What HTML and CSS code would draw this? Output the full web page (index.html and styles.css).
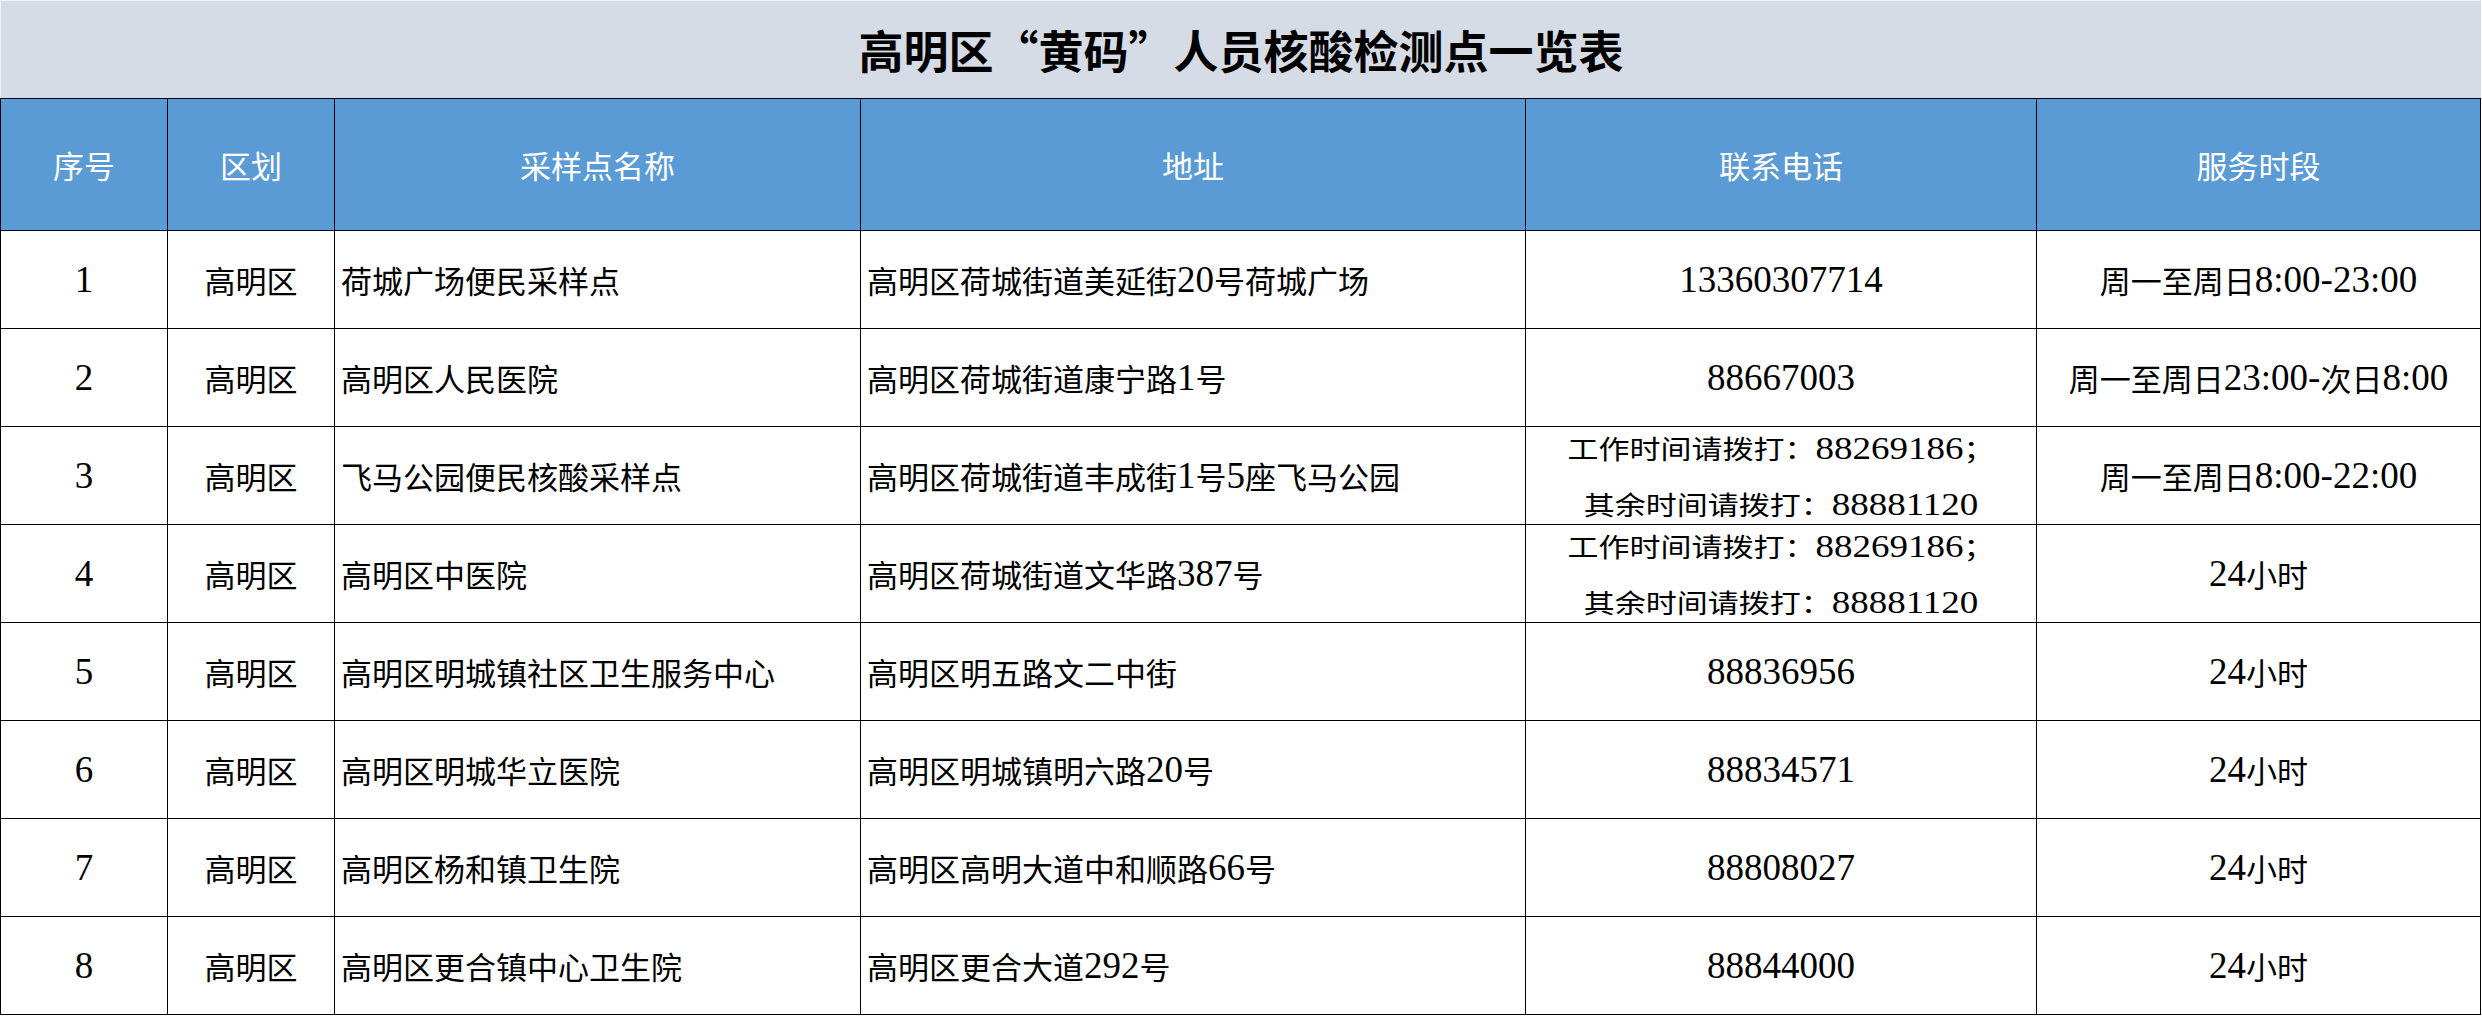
FILE: index.html
```html
<!DOCTYPE html>
<html lang="zh-CN">
<head>
<meta charset="utf-8">
<title>高明区“黄码”人员核酸检测点一览表</title>
<link rel="stylesheet" href="styles.css">
</head>
<body>
<div class="page">
  <div class="title">高明区“黄码”人员核酸检测点一览表</div>
  <div class="grid">
    <div class="cell head">序号</div>
    <div class="cell head">区划</div>
    <div class="cell head">采样点名称</div>
    <div class="cell head">地址</div>
    <div class="cell head">联系电话</div>
    <div class="cell head">服务时段</div>

    <div class="cell c n">1</div>
    <div class="cell c">高明区</div>
    <div class="cell l">荷城广场便民采样点</div>
    <div class="cell l">高明区荷城街道美延街<span class="n">20</span>号荷城广场</div>
    <div class="cell c n">13360307714</div>
    <div class="cell c">周一至周日<span class="n">8:00-23:00</span></div>

    <div class="cell c n">2</div>
    <div class="cell c">高明区</div>
    <div class="cell l">高明区人民医院</div>
    <div class="cell l">高明区荷城街道康宁路<span class="n">1</span>号</div>
    <div class="cell c n">88667003</div>
    <div class="cell c">周一至周日<span class="n">23:00-</span>次日<span class="n">8:00</span></div>

    <div class="cell c n">3</div>
    <div class="cell c">高明区</div>
    <div class="cell l">飞马公园便民核酸采样点</div>
    <div class="cell l">高明区荷城街道丰成街<span class="n">1</span>号<span class="n">5</span>座飞马公园</div>
    <div class="cell c">
      <div class="two">
        <span class="ln">工作时间请拨打：<span class="n">88269186</span>；</span>
        <span class="ln">其余时间请拨打：<span class="n">88881120</span></span>
      </div>
    </div>
    <div class="cell c">周一至周日<span class="n">8:00-22:00</span></div>

    <div class="cell c n">4</div>
    <div class="cell c">高明区</div>
    <div class="cell l">高明区中医院</div>
    <div class="cell l">高明区荷城街道文华路<span class="n">387</span>号</div>
    <div class="cell c">
      <div class="two">
        <span class="ln">工作时间请拨打：<span class="n">88269186</span>；</span>
        <span class="ln">其余时间请拨打：<span class="n">88881120</span></span>
      </div>
    </div>
    <div class="cell c"><span class="n">24</span>小时</div>

    <div class="cell c n">5</div>
    <div class="cell c">高明区</div>
    <div class="cell l">高明区明城镇社区卫生服务中心</div>
    <div class="cell l">高明区明五路文二中街</div>
    <div class="cell c n">88836956</div>
    <div class="cell c"><span class="n">24</span>小时</div>

    <div class="cell c n">6</div>
    <div class="cell c">高明区</div>
    <div class="cell l">高明区明城华立医院</div>
    <div class="cell l">高明区明城镇明六路<span class="n">20</span>号</div>
    <div class="cell c n">88834571</div>
    <div class="cell c"><span class="n">24</span>小时</div>

    <div class="cell c n">7</div>
    <div class="cell c">高明区</div>
    <div class="cell l">高明区杨和镇卫生院</div>
    <div class="cell l">高明区高明大道中和顺路<span class="n">66</span>号</div>
    <div class="cell c n">88808027</div>
    <div class="cell c"><span class="n">24</span>小时</div>

    <div class="cell c n">8</div>
    <div class="cell c">高明区</div>
    <div class="cell l">高明区更合镇中心卫生院</div>
    <div class="cell l">高明区更合大道<span class="n">292</span>号</div>
    <div class="cell c n">88844000</div>
    <div class="cell c"><span class="n">24</span>小时</div>
  </div>
</div>
</body>
</html>
```
FILE: styles.css
```css
html, body {
  margin: 0;
  padding: 0;
  background: #ffffff;
}

.page {
  width: 2481px;
  font-family: "Noto Sans CJK SC", sans-serif;
  color: #000000;
}

.title {
  height: 98px;
  background: #d6dce5;
  display: flex;
  align-items: center;
  justify-content: center;
  font-family: "Noto Sans CJK SC", sans-serif;
  font-weight: 700;
  font-size: 45px;
  color: #000000;
  box-sizing: border-box;
  border-top: 1px solid #eef1f5;
  border-left: 1px solid #eef1f5;
}

.grid {
  display: grid;
  grid-template-columns: 167px 167px 526px 665px 511px 444px;
  grid-template-rows: 132px repeat(8, 98px);
  border-top: 1px solid #000000;
  border-left: 1px solid #000000;
  width: 2480px;
}

.cell {
  box-sizing: border-box;
  border-right: 1px solid #000000;
  border-bottom: 1px solid #000000;
  display: flex;
  align-items: center;
  font-size: 31px;
  line-height: 40px;
  white-space: nowrap;
  overflow: visible;
}

.head {
  background: #5b9bd5;
  color: #ffffff;
  justify-content: center;
}

.c {
  justify-content: center;
}

.l {
  justify-content: flex-start;
  padding-left: 6px;
}

.n {
  font-family: "Liberation Serif", "Times New Roman", serif;
  font-size: 37px;
}

.two {
  display: flex;
  flex-direction: column;
  align-items: center;
  margin: -7px 0;
}

.ln {
  display: block;
  height: 56px;
  line-height: 56px;
  transform: scaleY(0.86);
}
```
